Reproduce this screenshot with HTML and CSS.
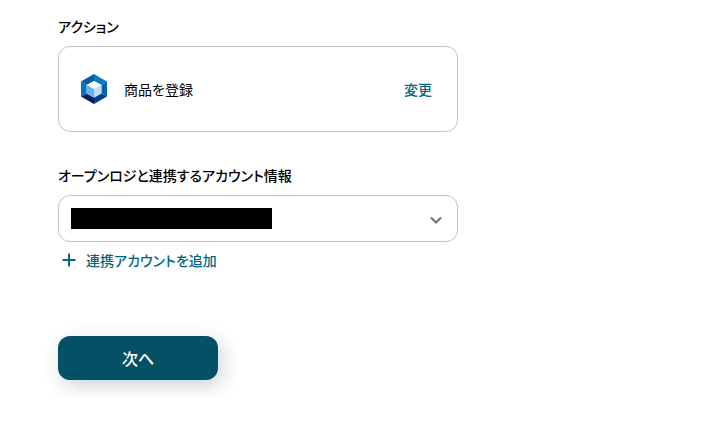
FILE: index.html
```
<!DOCTYPE html>
<html lang="ja">
<head>
    <meta charset="UTF-8">
    <meta name="viewport" content="width=device-width, initial-scale=1.0">
    <title>アクション</title>
    <link rel="stylesheet" href="styles.css">
</head>
<body>
    <form class="form">
        <!-- アクション -->
        <section class="field">
            <h2 class="label">アクション</h2>
            <div class="card">
                <svg class="logo" viewBox="0 0 28 32" aria-hidden="true">
                    <path fill="#0a7cc4" d="M14 1 27 8.5 21.4 12 14 8z"/>
                    <path fill="#0a5aa0" d="M14 1 1 8.5 6.6 12 14 8z"/>
                    <path fill="#0672be" d="M1 8.5 6.6 12v8.5L1 23.5z"/>
                    <path fill="#0463b0" d="M27 8.5 21.4 12v8.5l5.6 3z"/>
                    <path fill="#031f5c" d="M1 23.5 6.6 20.5l7.4 4V31z"/>
                    <path fill="#04408a" d="M27 23.5 21.4 20.5l-7.4 4V31z"/>
                    <path fill="#fff" d="M14 8 21.4 12 14 16 6.6 12z"/>
                    <path fill="#62b5e8" d="M6.6 12 14 16v8.5l-7.4-4z"/>
                    <path fill="#c3dcf4" d="M21.4 12 14 16v8.5l7.4-4z"/>
                </svg>
                <span class="card-name">商品を登録</span>
                <button type="button" class="text-button">変更</button>
            </div>
        </section>

        <!-- アカウント -->
        <section class="field">
            <label class="label" for="account">オープンロジと連携するアカウント情報</label>
            <div class="select-box">
                <select id="account" class="select">
                    <option value="1"></option>
                </select>
                <span class="mask"></span>
                <svg class="chevron" viewBox="0 0 12 8" aria-hidden="true">
                    <path d="M1 1.5 6 6.5 11 1.5"/>
                </svg>
            </div>
            <button type="button" class="text-button add">
                <svg class="plus" viewBox="0 0 14 14" aria-hidden="true">
                    <path d="M7 .5v13M.5 7h13"/>
                </svg>
                連携アカウントを追加
            </button>
        </section>

        <button type="button" class="next">次へ</button>
    </form>
</body>
</html>
```

FILE: styles.css
```
* {
    box-sizing: border-box;
}
body {
    margin: 0;
    padding: 16px 58px;
    background: #fff;
    color: #000;
    font-family: "Noto Sans CJK JP", sans-serif;
    font-size: 14px;
    line-height: 20px;
    font-feature-settings: "palt";
}
button, select {
    font: inherit;
    font-feature-settings: inherit;
}
.form {
    max-width: 400px;
}
.field {
    margin-bottom: 33px;
}
.label {
    display: block;
    margin: 0 0 10px;
    font-size: 14px;
    font-weight: 500;
}
.card {
    display: flex;
    align-items: center;
    padding: 26px 25px 26px 21px;
    border: 1px solid #c4c4c4;
    border-radius: 12px;
}
.logo {
    width: 28px;
    height: 32px;
    margin-right: 16px;
}
.card-name {
    flex: 1;
}
.text-button {
    padding: 0;
    border: 0;
    background: none;
    color: #04677f;
    font-weight: 500;
    cursor: pointer;
}
.select-box {
    position: relative;
}
.select {
    display: block;
    width: 100%;
    height: 47px;
    padding: 0 40px 0 12px;
    border: 1px solid #c4c4c4;
    border-radius: 12px;
    background: none;
    appearance: none;
}
/* アカウント名の目隠し */
.mask {
    position: absolute;
    top: 13px;
    left: 13px;
    width: 201px;
    height: 21px;
    background: #000;
    pointer-events: none;
}
.chevron {
    position: absolute;
    top: 21px;
    right: 16px;
    width: 12px;
    height: 8px;
    fill: none;
    stroke: #707070;
    stroke-width: 2;
    pointer-events: none;
}
.add {
    display: flex;
    align-items: center;
    gap: 10px;
    margin-top: 8px;
    padding-left: 4px;
}
.plus {
    width: 14px;
    height: 14px;
    fill: none;
    stroke: #04677f;
    stroke-width: 2;
}
.next {
    width: 160px;
    height: 44px;
    margin-top: 33px;
    border: 0;
    border-radius: 12px;
    background: #045064;
    color: #fff;
    font-size: 16px;
    font-weight: 500;
    box-shadow: 4px 6px 20px rgba(10, 35, 55, 0.2);
    cursor: pointer;
}
```
